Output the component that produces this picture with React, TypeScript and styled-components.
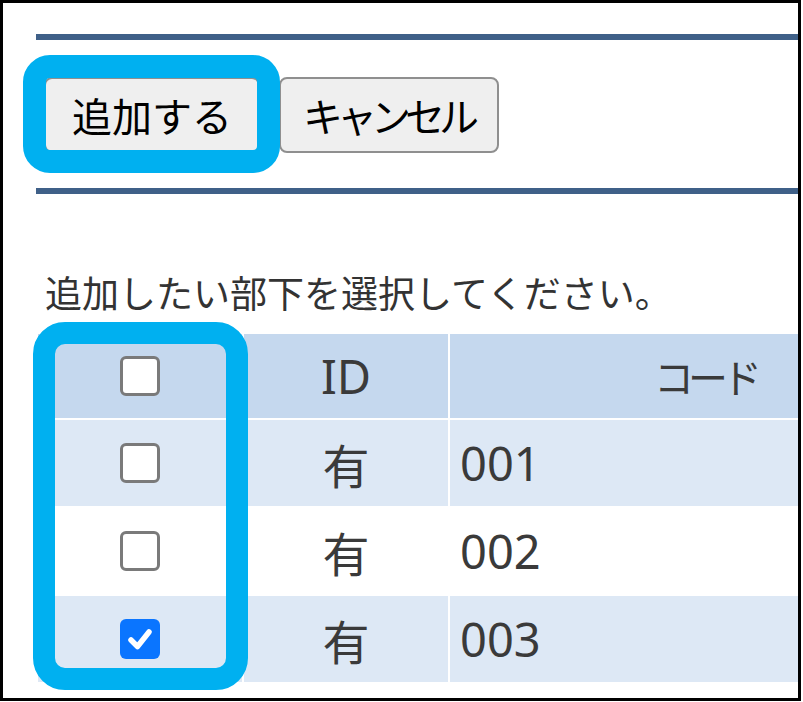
import React from "react";
import styled, { createGlobalStyle } from "styled-components";

const Global = createGlobalStyle`
  html, body { margin: 0; padding: 0; background: #fff; }
  body { font-family: "Noto Sans CJK JP", "Noto Sans", sans-serif; }
  * { box-sizing: border-box; }
`;

const Frame = styled.div`
  position: relative;
  width: 801px;
  height: 701px;
  border: 3px solid #000;
  overflow: hidden;
  background: #fff;
`;

const Content = styled.div`
  padding-top: 31px;
  width: 1200px;
`;

const Rule = styled.div`
  margin-left: 33px;
  height: 6px;
  background: #3f6088;
`;

const ButtonRow = styled.div`
  display: flex;
  gap: 19px;
  margin: 37px 0 35px 41px;
`;

const Button = styled.button<{ $tight?: boolean }>`
  height: 76px;
  padding: ${(p) => (p.$tight ? "0 24px 0 22px" : "0 26px")};
  font-family: "Noto Sans CJK JP", sans-serif;
  font-size: 40px;
  line-height: 1;
  letter-spacing: ${(p) => (p.$tight ? "-6px" : "0")};
  color: #000;
  background: #efefef;
  border: 2px solid #8f8f8f;
  border-radius: 8px;
`;

const Label = styled.p`
  margin: 76px 0 0 42px;
  font-family: "Noto Sans CJK JP", sans-serif;
  font-size: 37px;
  line-height: 44px;
  color: #333;
`;

const Table = styled.div`
  margin: 20px 0 0 35px;
  display: flex;
  flex-direction: column;
  gap: 2px;
`;

const Row = styled.div<{ $bg: string; $h: number }>`
  display: grid;
  grid-template-columns: 204px 204px 508px;
  gap: 2px;
  height: ${(p) => p.$h}px;
  & > * { background: ${(p) => p.$bg}; }
`;

const Cell = styled.div<{ $align?: "center" | "left" }>`
  display: flex;
  align-items: center;
  justify-content: ${(p) => (p.$align === "left" ? "flex-start" : "center")};
  padding-left: ${(p) => (p.$align === "left" ? "10px" : "0")};
  font-family: "Noto Sans", "Noto Sans CJK JP", sans-serif;
  font-size: 47px;
  color: #3a3a3a;
`;

const Kana = styled.span`
  font-family: "Noto Sans CJK JP", sans-serif;
  font-size: 40px;
  letter-spacing: -6px;
  margin-left: 2px;
`;

const Box = styled.span<{ $checked?: boolean }>`
  display: flex;
  align-items: center;
  justify-content: center;
  width: 40px;
  height: 40px;
  border-radius: 6px;
  background: ${(p) => (p.$checked ? "#0a75ff" : "#fff")};
  border: ${(p) => (p.$checked ? "none" : "3px solid #7a7a7a")};
`;

const Highlight = styled.div<{ $r: number; $w: number }>`
  position: absolute;
  border: ${(p) => p.$w}px solid #00b0f0;
  border-radius: ${(p) => p.$r}px;
  pointer-events: none;
`;

const Check = ({ checked }: { checked?: boolean }) => (
  <Box $checked={checked}>
    {checked && (
      <svg width="30" height="30" viewBox="0 0 30 30">
        <path
          d="M6 16 L12.5 22.5 L24 8"
          fill="none"
          stroke="#fff"
          strokeWidth="5.5"
          strokeLinecap="round"
          strokeLinejoin="round"
        />
      </svg>
    )}
  </Box>
);

const rows = [
  { code: "001", checked: false, bg: "#dde8f5" },
  { code: "002", checked: false, bg: "#ffffff" },
  { code: "003", checked: true, bg: "#dde8f5" },
];

export default function App() {
  return (
    <>
      <Global />
      <Frame>
        <Content>
          <Rule />
          <ButtonRow>
            <Button>追加する</Button>
            <Button $tight>キャンセル</Button>
          </ButtonRow>
          <Rule />
          <Label>追加したい部下を選択してください。</Label>
          <Table>
            <Row $bg="#c5d8ee" $h={84}>
              <Cell>
                <Check />
              </Cell>
              <Cell>ID</Cell>
              <Cell>
                <Kana>コード</Kana>
              </Cell>
            </Row>
            {rows.map((r) => (
              <Row key={r.code} $bg={r.bg} $h={86}>
                <Cell>
                  <Check checked={r.checked} />
                </Cell>
                <Cell>有</Cell>
                <Cell $align="left">{r.code}</Cell>
              </Row>
            ))}
          </Table>
        </Content>
        <Highlight $w={23} $r={27} style={{ left: 20, top: 52, width: 257, height: 118 }} />
        <Highlight $w={22} $r={32} style={{ left: 30, top: 319, width: 215, height: 368 }} />
      </Frame>
    </>
  );
}
